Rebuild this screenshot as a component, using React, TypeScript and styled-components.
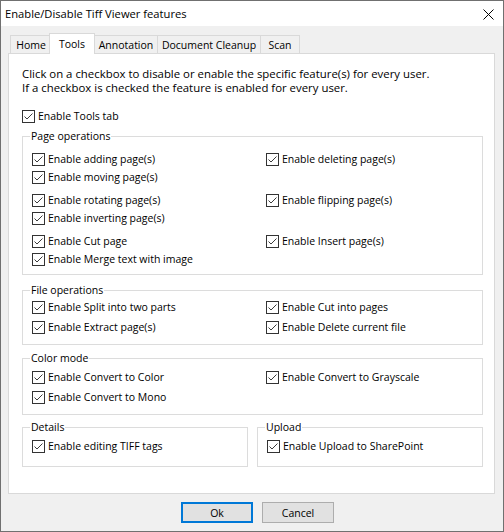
import React from "react";
import styled, { createGlobalStyle } from "styled-components";

const GlobalStyle = createGlobalStyle`
  *, *::before, *::after { box-sizing: border-box; }
  html, body { margin: 0; padding: 0; background: #ffffff; }
  body {
    font-family: "Open Sans", "Noto Sans", sans-serif;
    font-size: 10.5px;
    color: #000000;
  }
`;

const pageSections: string[][] = [
  ["Enable adding page(s)", "Enable deleting page(s)", "Enable moving page(s)"],
  ["Enable rotating page(s)", "Enable flipping page(s)", "Enable inverting page(s)"],
  ["Enable Cut page", "Enable Insert page(s)", "Enable Merge text with image"],
];

const fileOps = [
  "Enable Split into two parts",
  "Enable Cut into pages",
  "Enable Extract page(s)",
  "Enable Delete current file",
];

const colorOps = [
  "Enable Convert to Color",
  "Enable Convert to Grayscale",
  "Enable Convert to Mono",
];

const tabs = [
  { label: "Home", width: 42 },
  { label: "Tools", width: 46, active: true },
  { label: "Annotation", width: 64 },
  { label: "Document Cleanup", width: 104 },
  { label: "Scan", width: 40 },
];

const Tick = () => (
  <CheckBox>
    <svg width="11" height="11" viewBox="0 0 11 11">
      <polyline points="1.5,5.5 4,8 9.5,2.5" fill="none" stroke="#3c3c3c" strokeWidth="1" />
    </svg>
  </CheckBox>
);

const Check = ({ label }: { label: string }) => (
  <CheckRow>
    <Tick />
    <CheckLabel>{label}</CheckLabel>
  </CheckRow>
);

type GroupProps = {
  title: string;
  pt: number;
  pb: number;
  mt?: number;
  children: React.ReactNode;
};

const Group = ({ title, pt, pb, mt = 0, children }: GroupProps) => (
  <GroupBox $pt={pt} $pb={pb} $mt={mt}>
    <GroupTitle>{title}</GroupTitle>
    {children}
  </GroupBox>
);

const App = () => {
  return (
    <>
      <GlobalStyle />
      <Window>
        <TitleBar>
          <TitleText>Enable/Disable Tiff Viewer features</TitleText>
          <CloseButton>
            <svg width="11" height="11" viewBox="0 0 11 11">
              <path d="M0.5 0.5 L10.5 10.5 M10.5 0.5 L0.5 10.5" stroke="#000" strokeWidth="1" />
            </svg>
          </CloseButton>
        </TitleBar>
        <Client>
          <TabStrip>
            {tabs.map((t, i) => (
              <Tab key={t.label} $active={!!t.active} $first={i === 0} style={{ width: t.width }}>
                {t.label}
              </Tab>
            ))}
          </TabStrip>
          <Panel>
            <Intro>
              <IntroLine>
                Click on a checkbox to disable or enable the specific feature(s) for every user.
              </IntroLine>
              <IntroLine>If a checkbox is checked the feature is enabled for every user.</IntroLine>
            </Intro>
            <ToolsRow>
              <Tick />
              <CheckLabel>Enable Tools tab</CheckLabel>
            </ToolsRow>

            <Group title="Page operations" pt={7} pb={6} mt={4}>
              <SectionStack>
                {pageSections.map((s) => (
                  <OptionGrid key={s[0]} $gap={1}>
                    {s.map((o) => (
                      <Check key={o} label={o} />
                    ))}
                  </OptionGrid>
                ))}
              </SectionStack>
            </Group>

            <Group title="File operations" pt={1} pb={8} mt={8}>
              <OptionGrid $gap={3}>
                {fileOps.map((o) => (
                  <Check key={o} label={o} />
                ))}
              </OptionGrid>
            </Group>

            <Group title="Color mode" pt={3} pb={8} mt={6}>
              <OptionGrid $gap={3}>
                {colorOps.map((o) => (
                  <Check key={o} label={o} />
                ))}
              </OptionGrid>
            </Group>

            <HalfRow>
              <Group title="Details" pt={3} pb={11}>
                <Check label="Enable editing TIFF tags" />
              </Group>
              <Group title="Upload" pt={3} pb={11}>
                <Check label="Enable Upload to SharePoint" />
              </Group>
            </HalfRow>
          </Panel>
          <Footer>
            <DialogButton $default>Ok</DialogButton>
            <DialogButton>Cancel</DialogButton>
          </Footer>
        </Client>
      </Window>
    </>
  );
};

export default App;

const Window = styled.div`
  width: 504px;
  height: 532px;
  border: 1px solid #707070;
  display: flex;
  flex-direction: column;
  background: #f0f0f0;
`;

const TitleBar = styled.div`
  height: 25px;
  flex: 0 0 25px;
  background: #ffffff;
  display: flex;
  align-items: center;
  justify-content: space-between;
  padding-left: 4px;
`;

const TitleText = styled.div`
  font-size: 11.2px;
  line-height: 14px;
  padding-top: 1px;
`;

const CloseButton = styled.div`
  width: 30px;
  height: 25px;
  display: flex;
  align-items: center;
  justify-content: center;
  padding-top: 1px;
`;

const Client = styled.div`
  flex: 1;
  padding: 7px 8px 8px 7px;
  display: flex;
  flex-direction: column;
`;

const TabStrip = styled.div`
  display: flex;
  align-items: flex-end;
  height: 20px;
  margin-left: 2px;
`;

const Tab = styled.div<{ $active: boolean; $first: boolean }>`
  position: relative;
  display: flex;
  align-items: center;
  justify-content: center;
  white-space: nowrap;
  border: 1px solid #d9d9d9;
  border-bottom: none;
  margin-left: ${(p) => (p.$first ? 0 : p.$active ? -3 : -1)}px;
  height: ${(p) => (p.$active ? 21 : 18)}px;
  margin-bottom: ${(p) => (p.$active ? -1 : 0)}px;
  padding: ${(p) => (p.$active ? "0 0 1px" : "1px 0 0")};
  background: ${(p) => (p.$active ? "#ffffff" : "#f0f0f0")};
  z-index: ${(p) => (p.$active ? 2 : 1)};
`;

const Panel = styled.div`
  width: 487px;
  height: 441px;
  flex: 0 0 441px;
  border: 1px solid #d9d9d9;
  background: #ffffff;
  padding: 13px 11px 0 13px;
`;

const Intro = styled.div`
  display: flex;
  flex-direction: column;
`;

const IntroLine = styled.div`
  font-size: 11.4px;
  line-height: 14px;
  height: 14px;
  white-space: nowrap;
`;

const ToolsRow = styled.div`
  display: flex;
  align-items: center;
  height: 17px;
  margin-top: 13px;
`;

const GroupBox = styled.fieldset<{ $pt: number; $pb: number; $mt: number }>`
  margin: ${(p) => p.$mt}px 0 0;
  padding: ${(p) => p.$pt}px 0 ${(p) => p.$pb}px 9px;
  border: 1px solid #dcdcdc;
  min-width: 0;
  flex: 1;
`;

const GroupTitle = styled.legend`
  padding: 0 1px;
  margin-left: -2px;
  height: 15px;
  line-height: 15px;
`;

const SectionStack = styled.div`
  display: flex;
  flex-direction: column;
  gap: 6px;
`;

const OptionGrid = styled.div<{ $gap: number }>`
  display: grid;
  grid-template-columns: 234px 1fr;
  grid-auto-rows: 17px;
  row-gap: ${(p) => p.$gap}px;
`;

const CheckRow = styled.div`
  display: flex;
  align-items: center;
  height: 17px;
  white-space: nowrap;
`;

const CheckBox = styled.span`
  width: 13px;
  height: 13px;
  flex: 0 0 13px;
  border: 1px solid #333333;
  background: #ffffff;
  display: flex;
`;

const CheckLabel = styled.span`
  margin-left: 3px;
  line-height: 15px;
`;

const HalfRow = styled.div`
  display: flex;
  gap: 9px;
  margin-top: 5px;
`;

const Footer = styled.div`
  display: flex;
  justify-content: center;
  gap: 9px;
  margin-top: 8px;
  padding-left: 12px;
`;

const DialogButton = styled.div<{ $default?: boolean }>`
  width: 72px;
  height: 21px;
  display: flex;
  align-items: center;
  justify-content: center;
  background: #e1e1e1;
  border: ${(p) => (p.$default ? "2px solid #0078d7" : "1px solid #adadad")};
`;
